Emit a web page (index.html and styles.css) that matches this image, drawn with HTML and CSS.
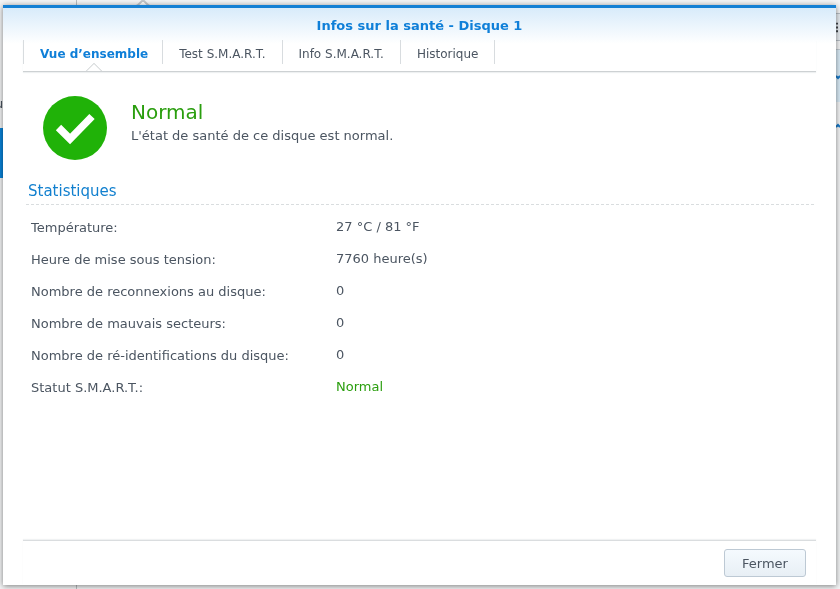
FILE: index.html
```html
<!DOCTYPE html>
<html lang="fr">
<head>
<meta charset="utf-8">
<title>Infos sur la santé - Disque 1</title>
<link rel="stylesheet" href="styles.css">
</head>
<body>
<div class="backdrop" aria-hidden="true">
  <span class="pane-edge pane-edge-top"></span>
  <span class="pane-edge pane-edge-bottom"></span>
  <svg class="notch" viewBox="0 0 14 6"><path d="M0 6 2 5 7 0 12 5 14 6" fill="#fff" stroke="#c4c8cb" stroke-width="2"/></svg>
  <span class="cut-label">u</span>
  <span class="selected-item"></span>
  <div class="side-list">
    <svg class="side-menu" viewBox="0 0 4 27"><path d="M0 10h2M0 14h2M0 18h2" stroke="#3c4248" stroke-width="2"/></svg>
    <span class="side-gap"></span>
    <svg class="side-row side-row-open" viewBox="0 0 4 52"><path d="M0 26 2 28 4 26" fill="none" stroke="#1678c8" stroke-width="2"/></svg>
    <svg class="side-row" viewBox="0 0 4 52"><path d="M0 25 2 23 4 25" fill="none" stroke="#1678c8" stroke-width="2"/></svg>
  </div>
</div>
<main class="dialog" role="dialog" aria-labelledby="dialog-title">
  <h1 class="title" id="dialog-title">Infos sur la santé - Disque 1</h1>
  <nav class="tabs">
    <a class="tab tab-active" href="#apercu">Vue d’ensemble</a>
    <a class="tab" href="#test">Test S.M.A.R.T.</a>
    <a class="tab" href="#info">Info S.M.A.R.T.</a>
    <a class="tab" href="#historique">Historique</a>
  </nav>
  <section class="status" id="apercu">
    <svg class="status-icon" viewBox="0 0 64 64" aria-hidden="true">
      <circle cx="32" cy="32" r="32" fill="#20b208"/>
      <path d="M15.500 31.500 27 43 49 20.500" fill="none" stroke="#fff" stroke-width="7.500"/>
    </svg>
    <div>
      <p class="status-name">Normal</p>
      <p class="status-text">L'état de santé de ce disque est normal.</p>
    </div>
  </section>
  <section class="stats">
    <h2 class="stats-title">Statistiques</h2>
    <table class="stats-table">
      <tr><th scope="row">Température:</th><td>27 °C / 81 °F</td></tr>
      <tr><th scope="row">Heure de mise sous tension:</th><td>7760 heure(s)</td></tr>
      <tr><th scope="row">Nombre de reconnexions au disque:</th><td>0</td></tr>
      <tr><th scope="row">Nombre de mauvais secteurs:</th><td>0</td></tr>
      <tr><th scope="row">Nombre de ré-identifications du disque:</th><td>0</td></tr>
      <tr><th scope="row">Statut S.M.A.R.T.:</th><td class="ok">Normal</td></tr>
    </table>
  </section>
  <footer class="footer">
    <button class="button" type="button">Fermer</button>
  </footer>
</main>
</body>
</html>
```

FILE: styles.css
```css
* {
  box-sizing: border-box;
}

body {
  margin: 0;
  min-height: 100vh;
  padding: 5px 4px 4px 3px;
  display: flex;
  background: #f4f5f6;
  color: #4b5561;
  font: 13px/16px Verdana, "DejaVu Sans", sans-serif;
}

h1, h2, p {
  margin: 0;
}

.backdrop {
  position: fixed;
  inset: 0;
  overflow: hidden;
}

.pane-edge {
  position: absolute;
  left: 76px;
  width: 1px;
  height: 5px;
  background: #b9bdc0;
}

.pane-edge-top {
  top: 0;
}

.pane-edge-bottom {
  bottom: 0;
}

.notch {
  position: absolute;
  left: 136px;
  top: 0;
  width: 14px;
  height: 6px;
}

.cut-label {
  position: absolute;
  left: -5px;
  top: 96px;
}

.selected-item {
  position: absolute;
  left: 0;
  top: 128px;
  width: 3px;
  height: 50px;
  background: #0a84da;
}

.side-list {
  position: absolute;
  right: 0;
  top: 13px;
  width: 4px;
  display: flex;
  flex-direction: column;
}

.side-menu {
  height: 28px;
  background: #e6ebf0;
  border-top: 1px solid #b8bfc6;
  border-bottom: 1px solid #b8bfc6;
}

.side-gap {
  height: 9px;
  border-bottom: 1px solid #c3ccd3;
}

.side-row {
  height: 52px;
}

.side-row-open {
  background: #d9ebf7;
}

.dialog {
  position: relative;
  flex: 1;
  display: flex;
  flex-direction: column;
  padding: 0 20px;
  border-top: 3px solid #1480d4;
  background: #fff linear-gradient(#d8ebfa, #fff 36px) no-repeat;
  box-shadow: 0 1px 6px rgba(0, 0, 0, 0.5);
}

.title {
  padding: 10px 0 6px;
  color: #0f7fd8;
  font-size: 13px;
  line-height: 16px;
  text-align: center;
}

.tabs {
  display: flex;
  height: 32px;
  padding-bottom: 7px;
  border-bottom: 1px solid #cdd1d3;
  box-shadow: 0 1px 1px #eef0f1;
}

.tab {
  position: relative;
  padding: 6px 16px 2px;
  border-right: 1px solid #d8dcdf;
  color: #4b5561;
  font-size: 12px;
  text-decoration: none;
}

.tab-active {
  padding-right: 14px;
  border-left: 1px solid #d8dcdf;
  color: #0f7fd8;
  font-weight: bold;
}

.tab-active::after {
  content: "";
  position: absolute;
  left: 50%;
  bottom: -13px;
  width: 10px;
  height: 10px;
  margin-left: -5px;
  border: 1px solid #cdd1d3;
  background: #fff;
  transform: rotate(45deg);
  clip-path: polygon(0 0, 100% 0, 0 100%);
}

.status {
  display: flex;
  gap: 24px;
  padding: 24px 20px 0;
}

.status-icon {
  width: 64px;
  height: 64px;
}

.status-name {
  padding-top: 4px;
  color: #2a9e0e;
  font-size: 20px;
  line-height: 24px;
}

.status-text {
  padding-top: 4px;
}

.stats {
  flex: 1;
  padding: 20px 2px 0 3px;
}

.stats-title {
  padding: 0 2px 2px;
  border-bottom: 1px dashed #d9dddf;
  color: #1280cf;
  font-size: 15px;
  font-weight: normal;
  line-height: 22px;
}

.stats-table {
  width: 100%;
  margin-top: 7px;
  border-collapse: collapse;
  table-layout: fixed;
}

.stats-table th,
.stats-table td {
  height: 32px;
  padding: 0 5px;
  text-align: left;
  font-weight: normal;
}

.stats-table th {
  width: 305px;
}

.stats-table td {
  padding-bottom: 2px;
}

.stats-table .ok {
  color: #2a9e0e;
}

.footer {
  display: flex;
  justify-content: flex-end;
  padding: 8px 10px;
  border-top: 1px solid #dadddf;
  box-shadow: 0 -1px 1px #f0f2f3;
}

.button {
  min-width: 82px;
  height: 28px;
  padding-top: 2px;
  border: 1px solid #bdc9d4;
  border-radius: 3px;
  background: linear-gradient(#f5fafe, #e8eff5);
  color: #4b5561;
  font: inherit;
}
```
